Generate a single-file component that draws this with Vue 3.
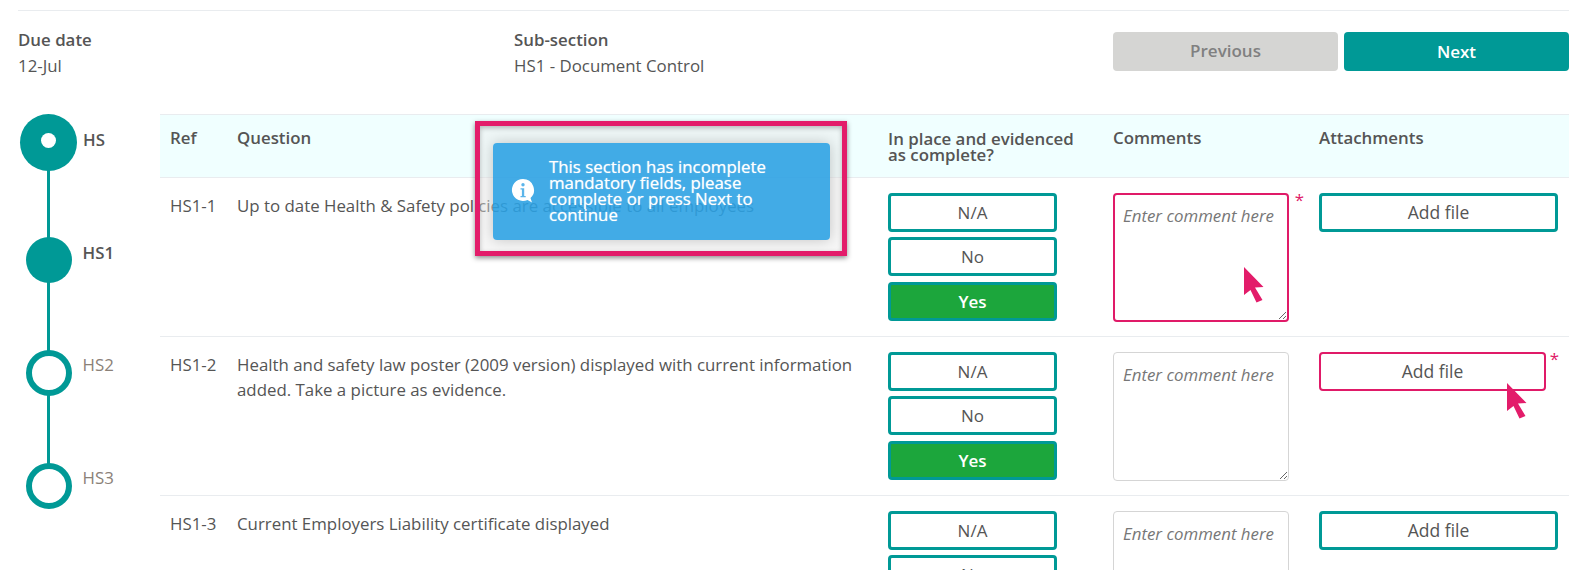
<template>
  <div class="page">
    <div class="meta">
      <div class="meta-item due">
        <div class="meta-label">Due date</div>
        <div class="meta-value">12-Jul</div>
      </div>
      <div class="meta-item sub">
        <div class="meta-label">Sub-section</div>
        <div class="meta-value">HS1 - Document Control</div>
      </div>
      <div class="nav">
        <button class="nav-btn prev">Previous</button>
        <button class="nav-btn next">Next</button>
      </div>
    </div>

    <div class="body">
      <div class="stepper">
        <div v-for="step in steps" :key="step.label" class="step" :class="step.kind">
          <div class="dot"></div>
          <span class="step-label">{{ step.label }}</span>
        </div>
      </div>

      <div class="table">
        <div class="row head">
          <div class="col-ref">Ref</div>
          <div class="col-question">Question</div>
          <div class="col-answer">In place and evidenced as complete?</div>
          <div class="col-comments">Comments</div>
          <div class="col-files">Attachments</div>
        </div>

        <div v-for="q in questions" :key="q.ref" class="row">
          <div class="col-ref">{{ q.ref }}</div>
          <div class="col-question">{{ q.text }}</div>
          <div class="col-answer answers">
            <button class="answer">N/A</button>
            <button class="answer">No</button>
            <button class="answer" :class="{ yes: q.answered }">Yes</button>
          </div>
          <div class="col-comments">
            <div class="required-wrap">
              <textarea class="comment" :class="{ missing: q.needComment }" placeholder="Enter comment here"></textarea>
              <span v-if="q.needComment" class="star">*</span>
              <svg v-if="q.needComment" class="cursor cursor-comment" width="24" height="38" viewBox="0 0 24 38">
                <path d="M1 0 L20.500 20 L12 20.500 L19.500 33 L13.500 35.500 L7.500 23 L1 28 Z" fill="#e31c6a" />
              </svg>
            </div>
          </div>
          <div class="col-files">
            <div class="file-wrap" :class="{ short: q.needFile }">
              <button class="add-file" :class="{ missing: q.needFile }">Add file</button>
              <span v-if="q.needFile" class="star">*</span>
              <svg v-if="q.needFile" class="cursor cursor-file" width="24" height="38" viewBox="0 0 24 38">
                <path d="M1 0 L20.500 20 L12 20.500 L19.500 33 L13.500 35.500 L7.500 23 L1 28 Z" fill="#e31c6a" />
              </svg>
            </div>
          </div>
        </div>
      </div>
    </div>

    <div class="callout">
      <div class="toast">
        <svg class="toast-icon" width="26" height="28" viewBox="0 0 26 28">
          <path d="M13 2a11 11 0 1 0 4.500 21l4.500 2.500-1.500-4.500A11 11 0 0 0 13 2z" fill="#fff" />
          <circle cx="13" cy="7.700" r="1.700" fill="#5bb5ea" />
          <path d="M10.500 11.200h3.700v7.800h1.500v1.200h-5.200V19h1.400v-6.600h-1.400z" fill="#5bb5ea" />
        </svg>
        <div class="toast-text">This section has incomplete mandatory fields, please complete or press Next to continue</div>
      </div>
    </div>
  </div>
</template>

<script setup>
const steps = [
  { label: 'HS', kind: 'section' },
  { label: 'HS1', kind: 'current' },
  { label: 'HS2', kind: 'todo' },
  { label: 'HS3', kind: 'todo last' },
]

const questions = [
  {
    ref: 'HS1-1',
    text: 'Up to date Health & Safety policies are accessible to all employees',
    answered: true,
    needComment: true,
    needFile: false,
  },
  {
    ref: 'HS1-2',
    text: 'Health and safety law poster (2009 version) displayed with current information added. Take a picture as evidence.',
    answered: true,
    needComment: false,
    needFile: true,
  },
  {
    ref: 'HS1-3',
    text: 'Current Employers Liability certificate displayed',
    answered: false,
    needComment: false,
    needFile: false,
  },
]
</script>

<style>
html,
body {
  overflow: hidden;
  background: #fff;
}
</style>

<style scoped>
.page {
  position: relative;
  height: 570px;
  overflow: hidden;
  box-sizing: border-box;
  padding: 10px 27px 0 18px;
  font-family: 'Open Sans', sans-serif;
  font-size: 16.850px;
  line-height: 25px;
  color: #555;
}

.meta {
  display: flex;
  align-items: flex-start;
  height: 104px;
  box-sizing: border-box;
  border-top: 1px solid #e9ecef;
  padding-top: 16px;
}
.meta-label {
  font-weight: 600;
}
.meta-value {
  margin-top: 1px;
}
.due {
  width: 496px;
}
.sub {
  width: 599px;
}
.nav {
  display: flex;
  gap: 6px;
  padding-top: 5px;
}
.nav-btn {
  width: 225px;
  height: 39px;
  border: 0;
  border-radius: 4px;
  font: 600 17px 'Open Sans', sans-serif;
}
.prev {
  background: #d5d5d3;
  color: #808080;
  padding-bottom: 3px;
}
.next {
  background: #009996;
  color: #fff;
}

.body {
  display: flex;
}

.stepper {
  width: 142px;
  flex: none;
  padding-left: 2px;
  box-sizing: border-box;
}
.step {
  position: relative;
  display: flex;
  height: 113px;
  padding-left: 5.500px;
}
.step::after {
  content: '';
  position: absolute;
  left: 27px;
  top: 40px;
  width: 3px;
  height: 90px;
  background: #009996;
}
.step.last::after {
  display: none;
}
.dot {
  position: relative;
  z-index: 1;
  width: 46px;
  height: 46px;
  box-sizing: border-box;
  border-radius: 50%;
  flex: none;
}
.step-label {
  margin-left: 11px;
  margin-top: 3px;
}
.section {
  height: 123px;
  padding-left: 0;
}
.section .dot {
  width: 57px;
  height: 57px;
  background: #009996;
  display: flex;
  align-items: center;
  justify-content: center;
}
.section .dot::before {
  content: '';
  width: 15px;
  height: 15px;
  border-radius: 50%;
  background: #fff;
  transform: translateY(-2px);
}
.section .step-label {
  margin-left: 6px;
  margin-top: 13px;
  font-weight: 600;
}
.current .dot {
  background: #009996;
}
.current .step-label {
  font-weight: 600;
}
.todo .dot {
  background: #fff;
  border: 6px solid #009996;
}
.todo .step-label {
  margin-top: 2px;
  color: #8b8178;
}

.table {
  flex: 1;
}
.row {
  display: grid;
  grid-template-columns: 77px 651px 225px 206px 1fr;
  height: 159px;
  box-sizing: border-box;
  padding-top: 15px;
  border-bottom: 1px solid #e9ecef;
}
.head {
  height: 64px;
  padding-top: 10px;
  background: #f0ffff;
  border-top: 1px solid #e9ecef;
  font-weight: 600;
}
.head .col-answer {
  line-height: 16px;
  padding-top: 6px;
  padding-right: 30px;
}
.col-ref {
  padding-left: 10px;
}
.col-question {
  padding-right: 16px;
}

.answers {
  display: flex;
  flex-direction: column;
  gap: 5.600px;
  padding-right: 56px;
}
.answer,
.add-file {
  height: 38.800px;
  box-sizing: border-box;
  border: 3px solid #009996;
  border-radius: 4px;
  background: #fff;
  color: #555;
  font: 17px 'Open Sans', sans-serif;
}
.add-file {
  font-size: 17.500px;
}
.answer.yes {
  background: #1ca63c;
  color: #fff;
  font-weight: 600;
}

.required-wrap {
  position: relative;
  width: 176px;
}
.comment {
  display: block;
  width: 176px;
  height: 129px;
  box-sizing: border-box;
  padding: 9px 9px;
  border: 1px solid #d5d5d5;
  border-radius: 4px;
  font: 16.850px/25px 'Open Sans', sans-serif;
  color: #555;
  outline: none;
}
.comment::placeholder {
  font-style: italic;
  color: #777;
}
.comment.missing {
  border: 2px solid #e01a68;
  padding: 8px 8px;
}
.star {
  position: absolute;
  top: -6px;
  right: -15px;
  color: #e01a68;
}
.file-wrap .star {
  right: -13px;
}

.file-wrap {
  position: relative;
  width: 239px;
}
.file-wrap.short {
  width: 227px;
}
.add-file {
  display: block;
  width: 100%;
}
.add-file.missing {
  border: 2px solid #e01a68;
}

.cursor {
  position: absolute;
}
.cursor-comment {
  left: 130px;
  top: 74px;
}
.cursor-file {
  left: 187px;
  top: 31px;
}

.callout {
  position: absolute;
  left: 475px;
  top: 121px;
  width: 372px;
  height: 135px;
  box-sizing: border-box;
  border: 5px solid #e31c6a;
  padding: 17px 12px 11px 13px;
  background: rgba(235, 235, 235, 0.45);
  box-shadow: 0 2px 5px rgba(0, 0, 0, 0.45), inset 0 2px 5px rgba(0, 0, 0, 0.25);
}
.toast {
  display: flex;
  align-items: center;
  height: 97px;
  box-sizing: border-box;
  padding-left: 17px;
  border-radius: 4px;
  background: rgba(21, 152, 226, 0.8);
  box-shadow: 0 0 14px rgba(0, 0, 0, 0.2);
  color: #fff;
}
.toast-icon {
  flex: none;
  margin-top: -2px;
}
.toast-text {
  margin-left: 13px;
  margin-top: -2px;
  width: 250px;
  line-height: 16px;
  text-shadow: 0 0 1px rgba(255, 255, 255, 0.7);
}
</style>
